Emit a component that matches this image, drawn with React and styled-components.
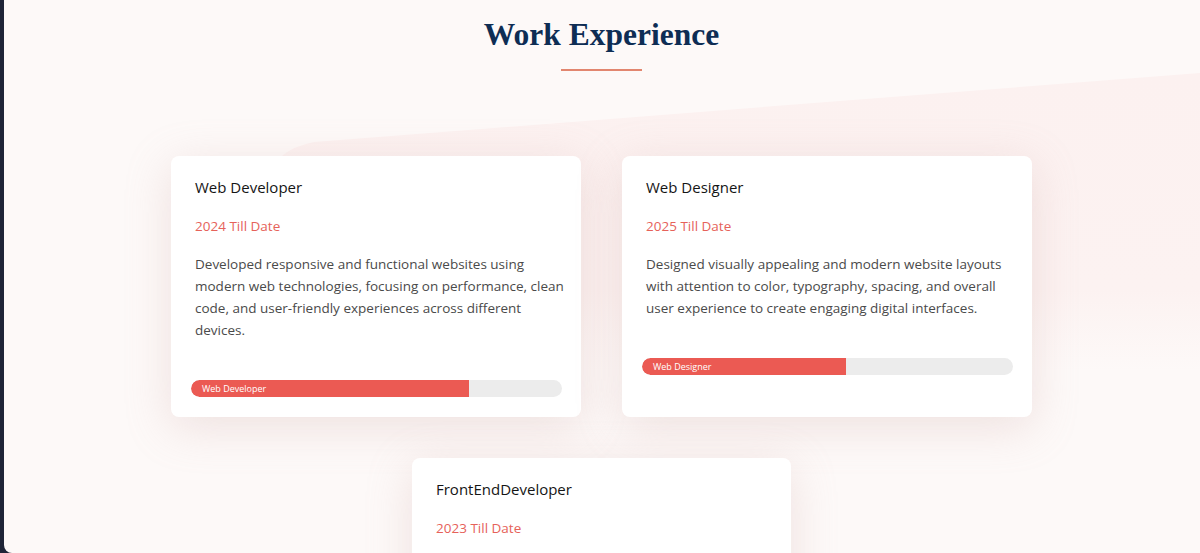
import styled, { createGlobalStyle } from "styled-components";

const GlobalStyle = createGlobalStyle`
  html, body {
    margin: 0;
    padding: 0;
    background: #1f2437;
    height: 100%;
  }
  * { box-sizing: border-box; }
`;

const experiences = [
  {
    title: "Web Developer",
    date: "2024 Till Date",
    text: "Developed responsive and functional websites using modern web technologies, focusing on performance, clean code, and user-friendly experiences across different devices.",
    skill: "Web Developer",
    level: 75,
    width: 410,
  },
  {
    title: "Web Designer",
    date: "2025 Till Date",
    text: "Designed visually appealing and modern website layouts with attention to color, typography, spacing, and overall user experience to create engaging digital interfaces.",
    skill: "Web Designer",
    level: 55,
    width: 410,
  },
  {
    title: "FrontEndDeveloper",
    date: "2023 Till Date",
    text: "Built interactive user interfaces with HTML, CSS and JavaScript, turning designs into clean, accessible and fast front end experiences.",
    skill: "FrontEnd",
    level: 65,
    width: 379,
  },
];

export default function App() {
  return (
    <>
      <GlobalStyle />
      <Page>
        <Wave viewBox="0 0 1196 553" preserveAspectRatio="none">
          <defs>
            <linearGradient id="waveFade" x1="0" y1="0" x2="0" y2="1">
              <stop offset="0" stopColor="#fcf1f0" />
              <stop offset="0.45" stopColor="#fcf2f1" />
              <stop offset="0.62" stopColor="#fdf9f8" />
            </linearGradient>
          </defs>
          <path d="M230 553 L262 185 Q268 150 310 142 L1196 73 L1196 553 Z" fill="url(#waveFade)" />
        </Wave>
        <Section>
          <Heading>Work Experience</Heading>
          <Underline />
          <Cards>
            {experiences.map((item) => (
              <Card key={item.title} $width={item.width}>
                <Title>{item.title}</Title>
                <Date>{item.date}</Date>
                <Text>{item.text}</Text>
                <Track>
                  <Fill style={{ width: `${item.level}%` }}>{item.skill}</Fill>
                </Track>
              </Card>
            ))}
          </Cards>
        </Section>
      </Page>
    </>
  );
}

const Page = styled.div`
  position: relative;
  margin-left: 4px;
  height: 553px;
  overflow: hidden;
  background: #fdf9f8;
  border-bottom-left-radius: 8px;
`;

const Wave = styled.svg`
  position: absolute;
  inset: 0;
  width: 100%;
  height: 100%;
`;

const Section = styled.section`
  position: relative;
  display: flex;
  flex-direction: column;
  align-items: center;
  padding-top: 12px;
  padding-right: 1px;
`;

const Heading = styled.h2`
  margin: 0;
  font-family: "Liberation Serif", "DejaVu Serif", serif;
  font-weight: 700;
  font-size: 31.5px;
  line-height: 46px;
  color: #0e2d54;
`;

const Underline = styled.div`
  width: 81px;
  height: 2px;
  margin-top: 11px;
  background: #e2866f;
`;

const Cards = styled.div`
  display: flex;
  flex-wrap: wrap;
  justify-content: center;
  gap: 41px;
  width: 100%;
  margin-top: 85px;
`;

const Card = styled.div`
  width: ${(p) => p.$width}px;
  display: flex;
  flex-direction: column;
  padding: 20px 16px 20px 24px;
  background: #ffffff;
  border-radius: 8px;
  box-shadow: 0 10px 45px rgba(205, 170, 165, 0.3);
  font-family: "Open Sans", "Noto Sans", sans-serif;
`;

const Title = styled.h3`
  margin: 0;
  font-size: 15px;
  font-weight: 400;
  line-height: 22px;
  color: #151515;
`;

const Date = styled.div`
  margin-top: 17px;
  font-size: 13.5px;
  line-height: 22px;
  color: #e6625a;
`;

const Text = styled.p`
  margin: 16px 0 0;
  font-size: 13.5px;
  line-height: 22px;
  color: #4a4a4a;
`;

const Track = styled.div`
  margin: 39px 3px 0 -4px;
  height: 17px;
  border-radius: 9px;
  background: #ececec;
  overflow: hidden;
`;

const Fill = styled.div`
  height: 100%;
  background: #eb5a53;
  border-radius: 9px 0 0 9px;
  color: #ffffff;
  font-size: 9px;
  line-height: 17px;
  padding-left: 11px;
  white-space: nowrap;
`;
